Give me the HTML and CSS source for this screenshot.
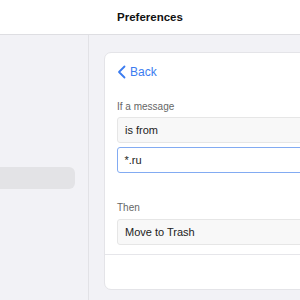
FILE: index.html
```html
<!DOCTYPE html>
<html lang="en">
<head>
<meta charset="UTF-8">
<meta name="viewport" content="width=device-width, initial-scale=1.0">
<title>Preferences</title>
<link rel="stylesheet" href="styles.css">
</head>
<body>
<div class="topbar">
    <h1>Preferences</h1>
</div>
<div class="layout">
    <div class="sidebar">
        <div class="side-item selected"></div>
    </div>
    <div class="main">
        <div class="card">
            <div class="card-body">
                <a class="back" href="#">
                    <svg width="9" height="14" viewBox="0 0 9 14"><path d="M7.5 1.5 L2 7 L7.5 12.5" fill="none" stroke="#3b7cf0" stroke-width="1.8" stroke-linecap="round" stroke-linejoin="round"/></svg>
                    Back
                </a>
                <div class="label">If a message</div>
                <div class="field">is from</div>
                <div class="field focused">*.ru</div>
                <div class="label then">Then</div>
                <div class="field">Move to Trash</div>
            </div>
            <div class="card-footer"></div>
        </div>
    </div>
</div>
</body>
</html>
```

FILE: styles.css
```css
body {
    margin: 0;
    width: 300px;
    height: 300px;
    overflow: hidden;
    font-family: "Liberation Sans", Arial, sans-serif;
    background-color: #f2f2f6;
    color: #1d1d1f;
}
.topbar {
    height: 34px;
    background-color: #fff;
    border-bottom: 1px solid #dedee2;
    display: flex;
    justify-content: center;
    align-items: center;
}
.topbar h1 {
    margin: 0 0 1px 0;
    font-size: 11.5px;
    font-weight: bold;
    color: #111;
}
.layout {
    display: flex;
    height: 265px;
}
.sidebar {
    width: 89px;
    flex-shrink: 0;
    border-right: 1px solid #e2e2e6;
    padding-top: 132px;
    box-sizing: border-box;
}
.side-item {
    height: 22px;
    width: 75px;
    border-radius: 0 6px 6px 0;
}
.side-item.selected {
    background-color: #e3e3e6;
}
.main {
    flex: 1;
    padding: 17px 0 0 15px;
}
.card {
    width: 260px;
    height: 238px;
    background-color: #fff;
    border: 1px solid #e4e4e8;
    border-radius: 7px;
    box-sizing: border-box;
    display: flex;
    flex-direction: column;
}
.card-body {
    padding: 11px 0 0 12px;
    height: 202px;
    box-sizing: border-box;
    border-bottom: 1px solid #e6e6ea;
}
.back {
    display: flex;
    align-items: center;
    gap: 4px;
    color: #3b7cf0;
    text-decoration: none;
    font-size: 12px;
    height: 16px;
}
.label {
    font-size: 10px;
    color: #666;
    margin-top: 21px;
    margin-bottom: 5px;
}
.label.then {
    margin-top: 29px;
    margin-bottom: 6px;
}
.field {
    height: 26px;
    box-sizing: border-box;
    background-color: #f8f8f8;
    border: 1px solid #e6e6e6;
    border-radius: 3px;
    padding-left: 7px;
    display: flex;
    align-items: center;
    font-size: 11px;
    color: #222;
    margin-bottom: 4px;
}
.field.focused {
    background-color: #fff;
    border: 1.5px solid #82abf2;
    padding-left: 6.5px;
}
.card-footer {
    flex: 1;
}
```
